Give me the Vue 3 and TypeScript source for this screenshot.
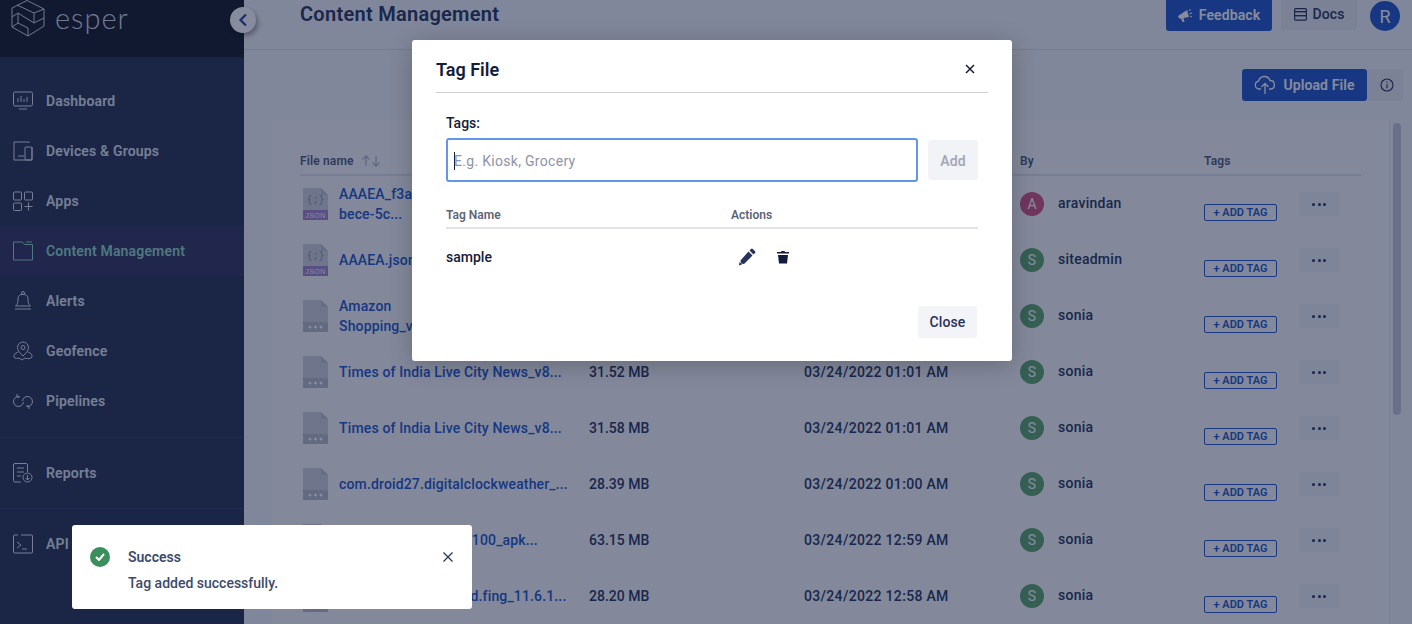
<script setup lang="ts">
interface Row { name: string[]; kind: 'json' | 'file'; size: string; date: string; by: string; color: string }
const rows: Row[] = [
  { name: ['AAAEA_f3a41c7e-', 'bece-5c...'], kind: 'json', size: '1.20 KB', date: '03/24/2022 01:10 AM', by: 'aravindan', color: '#d2527f' },
  { name: ['AAAEA.json'], kind: 'json', size: '1.20 KB', date: '03/24/2022 01:08 AM', by: 'siteadmin', color: '#5ca569' },
  { name: ['Amazon', 'Shopping_v24.5.0...'], kind: 'file', size: '58.71 MB', date: '03/24/2022 01:02 AM', by: 'sonia', color: '#5ca569' },
  { name: ['Times of India Live City News_v8...'], kind: 'file', size: '31.52 MB', date: '03/24/2022 01:01 AM', by: 'sonia', color: '#5ca569' },
  { name: ['Times of India Live City News_v8...'], kind: 'file', size: '31.58 MB', date: '03/24/2022 01:01 AM', by: 'sonia', color: '#5ca569' },
  { name: ['com.droid27.digitalclockweather_...'], kind: 'file', size: '28.39 MB', date: '03/24/2022 01:00 AM', by: 'sonia', color: '#5ca569' },
  { name: ['com.whatsapp_2.22.100_apk...'], kind: 'file', size: '63.15 MB', date: '03/24/2022 12:59 AM', by: 'sonia', color: '#5ca569' },
  { name: ['com.overlook.android.fing_11.6.1...'], kind: 'file', size: '28.20 MB', date: '03/24/2022 12:58 AM', by: 'sonia', color: '#5ca569' }
]
const nav = [
  { label: 'Dashboard', icon: 'dash' },
  { label: 'Devices & Groups', icon: 'dev' },
  { label: 'Apps', icon: 'apps' },
  { label: 'Content Management', icon: 'folder', active: true },
  { label: 'Alerts', icon: 'bell' },
  { label: 'Geofence', icon: 'geo' },
  { label: 'Pipelines', icon: 'pipe' }
]
</script>

<template>
  <div class="app">
    <aside class="side">
      <div class="brand">
        <svg class="logo" width="34" height="37" viewBox="0 0 34 37" fill="none" stroke="currentColor" stroke-width="1">
          <path d="M16 .5 33 9V26L17 36 1 27V8Z" />
          <path d="M6 5 23 13 33 9M23 13V23M1 17 7 13 23 23 33 18M1 27 7 23 17 28V36M7 13V23" />
        </svg>
        <span class="word">esper</span>
      </div>
      <nav class="nav">
        <a v-for="n in nav" :key="n.label" class="item" :class="{ on: n.active }">
          <svg class="ic" width="20" height="20" viewBox="0 0 20 20" fill="none" stroke="currentColor" stroke-width="1">
            <g v-if="n.icon === 'dash'"><rect x=".5" y="1" width="19" height="14" rx="1.500" /><path d="M5 11V7M8 11V5M11 11V8M14 11V6M6 18h8" /></g>
            <g v-else-if="n.icon === 'dev'"><path d="M16 2V1H1v18h18V6M5 15h6" /><rect x="12" y="6" width="7" height="13" rx="1" /></g>
            <g v-else-if="n.icon === 'apps'"><rect x=".5" y="1" width="8" height="8" rx="1" /><rect x="11.500" y="1" width="8" height="8" rx="1" /><rect x=".5" y="12" width="8" height="7.500" rx="1" /><path d="M15.500 11.500v8M11.500 15.500h8" /></g>
            <g v-else-if="n.icon === 'folder'"><path d="M12 3.500h7.500v15.500H.5V1H9l3 2.500Z" /><path d="M13 1h6" /></g>
            <g v-else-if="n.icon === 'bell'"><circle cx="10" cy="2" r="1.500" /><path d="M2.500 15c2-1.500 2.500-3.500 2.500-7 0-3.500 2-4.500 5-4.500s5 1 5 4.500c0 3.500.5 5.500 2.500 7ZM2 18h16" /></g>
            <g v-else-if="n.icon === 'geo'"><path d="M10 15C7 12 4.500 9.500 4.500 6.500a5.500 5.500 0 0 1 11 0C15.500 9.500 13 12 10 15Z" /><circle cx="10" cy="6.500" r="2" /><path d="M5 11c-3 1-4.500 3-4 5 1 2 4 1.500 5 1l3 2M15 11c3 1 4.500 3 4 5-1 2-5 2-7 1l-3 2" /></g>
            <g v-else><path d="M6 5.500A5 5 0 1 0 10.500 11M9.500 10A5 5 0 1 1 14 15.500M4 3v3h3M16 18v-3h-3" /></g>
          </svg>
          <span>{{ n.label }}</span>
        </a>
      </nav>
      <div class="group">
        <a class="item">
          <svg class="ic" width="20" height="20" viewBox="0 0 20 20" fill="none" stroke="currentColor" stroke-width="1"><path d="M8 19H2a1.500 1.500 0 0 1-1.500-1.500V2A1.500 1.500 0 0 1 2 .5h11A1.500 1.500 0 0 1 14.500 2v7M4 5h7M4 9h7M4 13h4" /><circle cx="14.500" cy="14.500" r="4.500" /><path d="M14.500 12v5M12.500 15l2 2 2-2" /></svg>
          <span>Reports</span>
        </a>
      </div>
      <div class="group">
        <a class="item">
          <svg class="ic" width="20" height="20" viewBox="0 0 20 20" fill="none" stroke="currentColor" stroke-width="1"><path d="M5 1H1.500A1 1 0 0 0 .5 2v16a1 1 0 0 0 1 1h17a1 1 0 0 0 1-1V2a1 1 0 0 0-1-1H8" /><path d="m4 8 4 3-4 3M9 15h5" /></svg>
          <span>API</span>
        </a>
      </div>
    </aside>

    <main class="main">
      <button class="collapse">
        <svg width="10" height="14" viewBox="0 0 10 14" fill="none" stroke="#26409a" stroke-width="2.200"><path d="M8 1.500 2.500 7 8 12.500" /></svg>
      </button>
      <header class="top">
        <h1>Content Management</h1>
        <div class="top-actions">
          <button class="btn primary fb">
            <svg width="16" height="14" viewBox="0 0 16 14" fill="currentColor"><path d="M0 8 9 2 11 9 5.500 10 6.500 14H4.500L3 10.500H1Z" /><path d="M11 3l1.500-2M11.500 5.500 14 5M12 8l2 1" stroke="currentColor" fill="none" /></svg>
            Feedback
          </button>
          <button class="btn soft docs">
            <svg width="13" height="13" viewBox="0 0 13 13" fill="none" stroke="currentColor" stroke-width="1.200"><rect x=".6" y=".6" width="11.800" height="3" rx="1" /><rect x=".6" y="3.600" width="11.800" height="4" /><rect x=".6" y="7.600" width="11.800" height="4.500" rx="1" /></svg>
            Docs
          </button>
          <span class="me">R</span>
        </div>
      </header>
      <div class="tools">
        <button class="btn primary up">
          <svg width="22" height="20" viewBox="0 0 22 20" fill="none" stroke="currentColor" stroke-width="1.300"><path d="M7 14H5a4 4 0 0 1-.5-7.900A6 6 0 0 1 16 5.500a4.300 4.300 0 0 1 1 8.500h-2" /><path d="M11 19V9M7.500 12 11 8.500 14.500 12" /></svg>
          Upload File
        </button>
        <button class="btn soft info">
          <svg width="14" height="14" viewBox="0 0 14 14" fill="none" stroke="currentColor" stroke-width="1.200"><circle cx="7" cy="7" r="6" /><path d="M7 6.200v4M7 3.500v1.200" /></svg>
        </button>
      </div>
      <section class="card">
        <div class="head tr">
          <span class="th-name">File name
            <svg class="sort" width="20" height="12" viewBox="0 0 20 12" fill="none" stroke="currentColor" stroke-width="1.300"><path d="M5 11V1M1.500 4.500 5 1l3.500 3.500M15 1v10M11.500 7.500 15 11l3.500-3.500" /></svg>
          </span>
          <span>Size</span><span>Uploaded on</span><span>By</span><span>Tags</span><span></span>
        </div>
        <div v-for="(r, i) in rows" :key="i" class="tr row">
          <div class="fname">
            <svg class="fic" width="25" height="32" viewBox="0 0 25 32">
              <path d="M0 0h18l7 7v25H0Z" fill="#d0d2da" />
              <path d="M18 0l7 7h-7Z" fill="#bcc0cc" />
              <template v-if="r.kind === 'json'">
                <rect y="22" width="25" height="10" fill="#a684ca" />
                <text x="12.500" y="15" text-anchor="middle" class="brace">{;}</text>
                <text x="12.500" y="30" text-anchor="middle" class="jt">JSON</text>
              </template>
              <template v-else>
                <rect y="22" width="25" height="10" fill="#b8bcc9" />
                <circle cx="7" cy="27" r="1.500" fill="#fff" /><circle cx="12.500" cy="27" r="1.500" fill="#fff" /><circle cx="18" cy="27" r="1.500" fill="#fff" />
              </template>
            </svg>
            <a class="link"><span v-for="l in r.name" :key="l">{{ l }}</span></a>
          </div>
          <span class="cell">{{ r.size }}</span>
          <span class="cell date">{{ r.date }}</span>
          <div class="by"><span class="ava" :style="{ background: r.color }">{{ r.by[0].toUpperCase() }}</span><span class="cell byn">{{ r.by }}</span></div>
          <div class="tagc"><span class="addtag">+ ADD TAG</span></div>
          <span class="more"><i></i><i></i><i></i></span>
        </div>
      </section>
      <div class="bar"><span class="thumb"></span></div>
    </main>

    <div class="scrim"></div>

    <div class="modal">
      <div class="m-head">
        <h2>Tag File</h2>
        <svg width="12" height="12" viewBox="0 0 12 12" stroke="#131c3a" stroke-width="1.500"><path d="M2 2l8 8M10 2l-8 8" /></svg>
      </div>
      <div class="m-body">
        <label class="lab">Tags:</label>
        <div class="addrow">
          <div class="inp"><i class="caret"></i><span>E.g. Kiosk, Grocery</span></div>
          <button class="btn addb">Add</button>
        </div>
        <div class="t-head"><span>Tag Name</span><span>Actions</span></div>
        <div class="t-row">
          <span>sample</span>
          <div class="acts">
            <svg width="18" height="18" viewBox="0 0 18 18" fill="#26335a"><path d="M11.500 2.500 13 1a1.300 1.300 0 0 1 1.800 0l2.200 2.200a1.300 1.300 0 0 1 0 1.800l-1.500 1.500ZM10.500 3.500l4 4L6 16l-3-.5-.5-3ZM1.500 14l2.500 2.500-3 1Z" /></svg>
            <svg width="12" height="14" viewBox="0 0 12 14" fill="#131c3a"><path d="M0 2h4l.5-1h3L8 2h4v1.500H0ZM1 5h10l-1 8.500H2Z" /></svg>
          </div>
        </div>
      </div>
      <div class="m-foot"><button class="btn closeb">Close</button></div>
    </div>

    <div class="toast">
      <span class="ok"><svg width="10" height="8" viewBox="0 0 10 8" fill="none" stroke="#fff" stroke-width="2"><path d="M1 4l3 3 5-6" /></svg></span>
      <div class="t-text"><strong>Success</strong><span>Tag added successfully.</span></div>
      <svg class="t-x" width="12" height="12" viewBox="0 0 12 12" stroke="#26335a" stroke-width="1.300"><path d="M1.500 1.500l9 9M10.500 1.500l-9 9" /></svg>
    </div>
  </div>
</template>

<style>
html, body { margin: 0; }
</style>

<style scoped>
.app { position: relative; width: 1412px; height: 624px; overflow: hidden; display: flex; background: #f4f5f8; font-family: "Roboto", "Noto Sans", sans-serif; color: #26335a; }
.side { width: 244px; flex: none; background: #293050; color: #dfe4ee; display: flex; flex-direction: column; }
.brand { height: 57px; box-sizing: border-box; background: #131822; display: flex; align-items: flex-start; gap: 10px; padding: 0 0 0 11px; color: #d4dae6; }
.word { font-family: "Lato", sans-serif; font-weight: 300; font-size: 29px; letter-spacing: 1px; line-height: 36px; }
.nav { padding-top: 19px; padding-bottom: 11px; }
.item { display: flex; align-items: center; height: 50px; padding-left: 13px; gap: 13px; font-size: 14px; font-weight: 600; letter-spacing: .17px; }
.ic { flex: none; }
.item.on { background: #34325c; color: #8ed8c6; }
.group { border-top: 1px solid #363d66; padding: 10px 0; }
.main { flex: 1; min-width: 0; position: relative; }
.collapse { position: absolute; z-index: 1; left: -14px; top: 7px; width: 26px; height: 26px; padding: 0; border: 0; border-radius: 50%; background: #fff; box-shadow: 2px 3px 5px rgba(0, 0, 0, .35); display: flex; align-items: center; justify-content: center; }
.top { height: 50px; box-sizing: border-box; border-bottom: 1px solid #d9dde6; display: flex; align-items: flex-start; justify-content: space-between; padding: 0 12px 0 56px; }
h1 { margin: 0; font-size: 20px; line-height: 28px; font-weight: 600; letter-spacing: .28px; color: #26335a; }
.top-actions { display: flex; align-items: flex-start; }
.btn { border: 0; font: inherit; font-weight: 600; font-size: 14px; letter-spacing: .1px; border-radius: 3px; display: inline-flex; align-items: center; justify-content: center; }
.primary { background: #2154c8; color: #fff; }
.soft { background: #e9ebf1; color: #26335a; }
.fb { width: 106px; height: 31px; padding: 0 0 2px; gap: 5px; border-radius: 0 0 3px 3px; }
.docs { width: 76px; height: 30px; padding: 0 0 2px; gap: 6px; margin-left: 9px; font-weight: 500; border-radius: 0 0 3px 3px; }
.me { width: 30px; height: 30px; margin: 1px 0 0 13px; border-radius: 50%; background: #2154c8; color: #fff; font-size: 18px; display: flex; align-items: center; justify-content: center; }
.tools { display: flex; justify-content: flex-end; align-items: center; padding: 19px 9px 0 0; height: 32px; }
.up { width: 125px; height: 32px; gap: 7px; }
.info { width: 36px; height: 32px; padding: 0 0 0 4px; }
.card { position: absolute; left: 28px; top: 120px; right: 23px; height: 520px; box-sizing: border-box; background: #f8f9fb; padding-left: 28px; }
.tr { display: grid; grid-template-columns: 289px 215px 216px 184px 95px 40px; align-items: center; width: 1061px; }
.head.tr { height: 56px; box-sizing: border-box; align-items: start; padding-top: 34px; border-bottom: 2px solid #dfe2ea; font-size: 12px; font-weight: 600; color: #4d5a7a; letter-spacing: .15px; }
.th-name { display: flex; align-items: center; gap: 7px; height: 14px; }
.sort { color: #b3b9c8; }
.row { height: 56px; }
.fname { display: flex; align-items: center; gap: 11px; padding-left: 3px; }
.fic { flex: none; }
.brace { font-size: 10px; fill: #8f95a8; font-family: "DejaVu Sans Mono", monospace; }
.jt { font-size: 7px; fill: #fff; font-family: "Liberation Sans", sans-serif; letter-spacing: .5px; }
.link { display: flex; flex-direction: column; font-size: 14px; font-weight: 500; line-height: 20px; letter-spacing: .15px; color: #2154c8; white-space: nowrap; }
.cell { font-size: 14px; font-weight: 500; color: #26335a; }
.date { letter-spacing: .32px; }
.byn { letter-spacing: .25px; padding-bottom: 2px; }
.by { display: flex; align-items: center; gap: 14px; }
.ava { width: 24px; height: 24px; border-radius: 50%; color: #fff; font-size: 14px; display: flex; align-items: center; justify-content: center; }
.tagc { padding-top: 14px; }
.addtag { display: inline-block; box-sizing: border-box; width: 73px; height: 17px; border: 1px solid #2154c8; border-radius: 2px; color: #2154c8; font-size: 11px; font-weight: 600; line-height: 15px; text-align: center; }
.more { width: 40px; height: 24px; background: #eef0f4; border-radius: 2px; display: flex; gap: 2.500px; align-items: center; justify-content: center; }
.more i { width: 3px; height: 3px; border-radius: 50%; background: #26335a; }
.bar { position: absolute; right: 0; top: 120px; bottom: 0; width: 23px; border-left: 1px solid #e3e6ec; left: 1145px; }
.thumb { position: absolute; left: 3px; top: 3px; width: 8px; height: 292px; border-radius: 4px; background: #c3c8d2; }
.scrim { position: absolute; z-index: 2; inset: 0; background: rgba(13, 26, 60, .5); }
.modal { position: absolute; z-index: 3; left: 412px; top: 40px; width: 600px; height: 321px; box-sizing: border-box; background: #fff; border-radius: 3px; padding: 0 24px; color: #131c3a; font-weight: 500; font-size: 14px; box-shadow: 0 4px 24px rgba(0, 0, 0, .22); }
.m-head { height: 46px; padding: 6px 12px 0 0; border-bottom: 1px solid #cfcfd3; display: flex; align-items: center; justify-content: space-between; }
h2 { margin: 0; font-size: 18px; font-weight: 600; }
.m-body { padding: 0 10px; }
.lab { display: block; padding-top: 21px; line-height: 18px; }
.addrow { display: flex; gap: 10px; margin-top: 6px; align-items: center; }
.inp { flex: 1; height: 44px; box-sizing: border-box; border: 2px solid #6296ea; border-radius: 3px; display: flex; align-items: center; padding: 1px 0 0 6px; color: #8d94a6; font-weight: 400; letter-spacing: .3px; }
.caret { width: 1px; height: 18px; background: #131c3a; margin-right: -1px; }
.addb { width: 50px; height: 40px; padding: 1px 0 0; background: #f2f3f6; color: #a4a9b7; }
.t-head { display: grid; grid-template-columns: 285px 1fr; margin-top: 25px; height: 20px; border-bottom: 2px solid #e2e3ea; font-size: 12px; font-weight: 600; color: #5c6578; line-height: 16px; }
.t-row { display: grid; grid-template-columns: 285px 1fr; align-items: center; height: 56px; }
.acts { display: flex; align-items: center; gap: 21px; padding-left: 7px; }
.m-foot { display: flex; justify-content: flex-end; padding-right: 11px; margin-top: 21px; }
.closeb { width: 59px; height: 32px; background: #f3f4f7; color: #26335a; font-weight: 500; }
.toast { position: absolute; z-index: 3; left: 72px; top: 525px; width: 400px; height: 84px; box-sizing: border-box; background: #fff; border-radius: 3px; display: flex; align-items: flex-start; padding: 22px 18px 0 18px; }
.ok { width: 20px; height: 20px; border-radius: 50%; background: #3a8f5c; display: flex; align-items: center; justify-content: center; flex: none; }
.t-text { flex: 1; display: flex; flex-direction: column; margin-left: 18px; margin-top: 1px; font-size: 14px; color: #3c4a6e; font-weight: 500; gap: 8px; line-height: 18px; }
.t-text strong { font-weight: 600; }
.t-x { margin-top: 4px; }
</style>
